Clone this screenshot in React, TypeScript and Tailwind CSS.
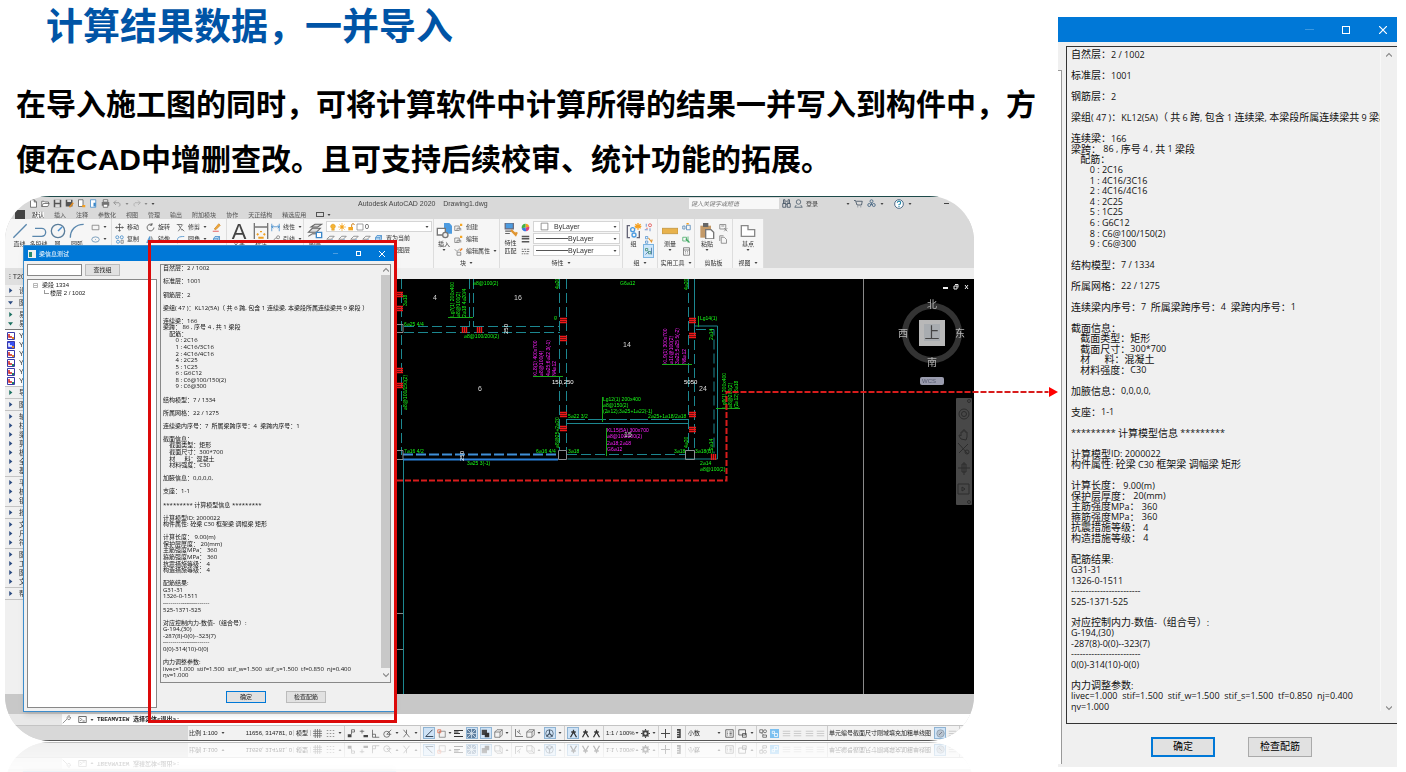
import React from "react";

const REPORT: string[] = [
  "自然层：2 / 1002", "", "标准层：1001", "", "钢筋层：2", "",
  "梁组( 47 )：KL12(5A)（ 共 6 跨, 包含 1 连续梁, 本梁段所属连续梁共 9 梁段 ）", "",
  "连续梁：166", "梁跨： 86 , 序号 4 , 共 1 梁段", "    配筋：",
  "        0 : 2C16", "        1 : 4C16/3C16", "        2 : 4C16/4C16", "        4 : 2C25",
  "        5 : 1C25", "        6 : G6C12", "        8 : C6@100/150(2)", "        9 : C6@300", "",
  "结构模型：7 / 1334", "", "所属网格：22 / 1275", "",
  "连续梁内序号：7  所属梁跨序号：4  梁跨内序号：1", "",
  "截面信息：", "    截面类型：矩形", "    截面尺寸：300*700", "    材      料：混凝土", "    材料强度：C30", "",
  "加腋信息：0,0,0,0,", "", "支座：1-1", "",
  "********* 计算模型信息 *********", "",
  "计算模型ID: 2000022", "构件属性: 砼梁 C30 框架梁 调幅梁 矩形", "",
  "计算长度： 9.00(m)", "保护层厚度： 20(mm)", "主筋强度MPa： 360", "箍筋强度MPa： 360",
  "抗震措施等级： 4", "构造措施等级： 4", "",
  "配筋结果:", "G31-31", "1326-0-1511", "------------------------", "525-1371-525", "",
  "对应控制内力-数值-（组合号）:", "G-194,(30)", "-287(8)-0(0)--323(7)", "------------------------",
  "0(0)-314(10)-0(0)", "", "内力调整参数:",
  "livec=1.000  stif=1.500  stif_w=1.500  stif_s=1.500  tf=0.850  nj=0.400", "ηv=1.000",
];

const UI = "font-['Liberation_Sans','Noto_Sans_CJK_SC',sans-serif]";

function Report({ large }: { large?: boolean }) {
  return (
    <div className={`flex h-full min-w-0 flex-1 flex-col overflow-x-clip font-['Open_Sans','Noto_Sans_CJK_SC',sans-serif] text-[#111] ${large ? "text-[9px]" : "text-[6px]"}`}>
      {REPORT.map((line, i) => (
        <div key={i} className="flex min-h-0 flex-1 items-center leading-none whitespace-pre">
          {line.split(/([\u3000-\u9fff\uff00-\uffef]+)/).map((run, j) => (
            <span key={j} className={j % 2 === 1 && large ? "text-[10px]" : ""}>{run}</span>
          ))}
        </div>
      ))}
    </div>
  );
}

type GlyphProps = { n: string; s?: string };

const GLYPHS: Record<string, React.ReactNode> = {
  line: <path d="M1 11 11 1" stroke="#5a87ad" />,
  pline: <path d="M1 10h7a3 3 0 0 0 0-6H3" stroke="#5a87ad" />,
  circle: <><circle cx="6" cy="6" r="5" stroke="#5a7d9a" /><path d="m6 6 3-3" stroke="#4a90d0" /></>,
  arc: <path d="M1 11C1 5 5 1 11 1" stroke="#5a87ad" />,
  rect: <path d="M1.500 3h9v6h-9z" stroke="#777" />,
  ellipse: <><ellipse cx="6" cy="6" rx="5" ry="3.500" stroke="#5a87ad" /><path d="M5.500 6h1" stroke="#5a87ad" /></>,
  move: <path d="M6 1v10M1 6h10M4.500 2.500 6 1l1.500 1.500M4.500 9.500 6 11l1.500-1.500M2.500 4.500 1 6l1.500 1.500M9.500 4.500 11 6 9.500 7.500" stroke="#444" />,
  rotate: <path d="M8 2a4.500 4.500 0 1 0 2.500 4M8 0v3h-3" stroke="#444" />,
  trim: <path d="M1 2h7M3 2l5 8M9 2 5 7M8 8l3 3M5 8l-2 3" stroke="#555" />,
  pencil: <><path d="m3 8 6-7 2 2-6 6z" fill="#f0a93b" stroke="#d08a2a" /><path d="M1 11h8" stroke="#d33" /></>,
  copy: <><circle cx="3" cy="3" r="2" stroke="#3c87c8" /><circle cx="9" cy="3" r="2" stroke="#3c87c8" /><circle cx="4" cy="9" r="2" stroke="#3c87c8" /><path d="M8 7h3v4H8z" stroke="#777" /></>,
  mirror: <><path d="M5 2v8H1z" fill="#7db4e0" stroke="#3c87c8" /><path d="M7 2v8h4z" stroke="#888" /></>,
  fillet: <path d="M2 11V7c0-4 2-5 9-5" stroke="#3c87c8" />,
  box: <path d="M2 5h6v5H2zM2 5l2-3h6L8 5M10 2v5l-2 3" fill="#b8d8f2" stroke="#3c87c8" />,
  dim: <><path d="M1 0v12M11 0v12M1 3h10" stroke="#777" /><path d="M6 6v1M3 8l1 1M9 8 8 9M4 11h4" stroke="#f0a020" strokeWidth="1.500" /></>,
  linear: <path d="M1 1v10M11 1v10M1 5h10M3 3 1 5l2 2M9 3l2 2-2 2" stroke="#3c87c8" />,
  leader: <><path d="M1 10 6 4h2" stroke="#777" /><circle cx="9.500" cy="3" r="2" stroke="#777" /></>,
  layers: <><path d="M3 3 6 1h5L8 3zM1 7l3-3h6L7 7zM1 10l3-2h5" fill="#ddd" stroke="#666" strokeWidth="0.800" /><path d="M7 7h4v4H7z" fill="#fff" stroke="#3c87c8" /></>,
  layer: <><path d="M1 7l4-4h6L7 7zM1 10h5l2-2" stroke="#777" /><path d="M8 7v4" stroke="#3c87c8" strokeWidth="1.500" /></>,
  bulb: <path d="M4 8a3.500 3.500 0 1 1 4 0v3H4z" fill="#f5b335" stroke="#c98b1c" strokeWidth="0.500" />,
  sun: <><circle cx="6" cy="6" r="2.500" fill="#f5a623" /><path d="M6 0v12M0 6h12M2 2l8 8M10 2l-8 8" stroke="#f5a623" /></>,
  lock: <><path d="M2 6h7v5H2z" fill="#f5a623" /><path d="M7 6V3a2 2 0 0 1 4 0" stroke="#d08a2a" strokeWidth="1.500" /></>,
  sq: <path d="M1.500 1.500h9v9h-9z" fill="#fff" stroke="#777" />,
  insert: <><path d="M6 0h4l2 2v6H6z" fill="#4c9be0" /><path d="M1 4h6v5H1z" fill="#fff" stroke="#777" /><circle cx="7" cy="9" r="2" fill="#eee" stroke="#777" /></>,
  create: <><path d="M1 4h6v6H1zM4 10v-3h5v3" stroke="#777" /><path d="M8 1h3v3H8z" fill="#f5a623" /></>,
  attr: <><path d="m1 3 3 3 4-4M4 7h5v4H4z" stroke="#777" /><path d="m8 5 3-3" stroke="#f08020" strokeWidth="2" /></>,
  match: <><path d="M1 0h7v5H1z" fill="#4c9be0" stroke="#667" /><path d="M1 7h5M1 9h4" stroke="#666" /><path d="m6 6 4 4 1-2" stroke="#e09530" strokeWidth="2" /></>,
  wheel: <><path d="M6 6V1a5 5 0 0 1 5 4z" fill="#f5a020" /><path d="m6 6 5-1a5 5 0 0 1-4 6z" fill="#e0407a" /><path d="m6 6 1 5a5 5 0 0 1-6-4z" fill="#3c78e0" /><path d="M6 6 1 7a5 5 0 0 1 5-6z" fill="#45b045" /></>,
  weight: <path d="M1 2h10M1 5h10M1 9h10" stroke="#555" strokeWidth="1.800" />,
  dashes: <path d="M1 3h2m1 0h3m1 0h3M1 6h3m1 0h2m1 0h3M1 9h2m1 0h2m1 0h3" stroke="#555" />,
  group: <><path d="M3 2H1v9h2M8 11h2V6" stroke="#667" /><circle cx="5" cy="5" r="1.500" stroke="#4c9be0" /><circle cx="6" cy="9" r="1.500" stroke="#4c9be0" /><path d="M9 0v5M6.500 2.500h5M7 1l4 3M11 1 7 4" stroke="#f5a020" /></>,
  ungroup: <><path d="M3 1v4M1 9h4M8 7v4" stroke="#4c78c0" /><circle cx="8" cy="3" r="2" stroke="#e04040" /><path d="M3 7h2" stroke="#e04040" /></>,
  gedit: <><path d="M2 2h3v3H2zM2 8h3v3H2z" stroke="#4c90d0" /><path d="m6 4 4 5 1-3" stroke="#e09530" strokeWidth="1.500" /></>,
  gsel: <><path d="M2 2h3v3H2zM6 6h3v3H6z" stroke="#3a8a6a" /><path d="M10 1v9M2 10l4-4" stroke="#3a6a9a" /></>,
  ruler: <path d="M0 4h12v4H0z" fill="#e8b24c" stroke="#b8862c" strokeWidth="0.500" />,
  calc: <path d="M2 1h8v10H2zM2 4h8M4 6h1m2 0h1M4 8h1m2 0h1" stroke="#666" />,
  green: <><path d="M1 3h5v5H1zM8 2v8" stroke="#3fa860" /><path d="m5 5 5 5" stroke="#3fa860" strokeWidth="1.500" /></>,
  meas: <><path d="M1 4h3v4H1zM6 3h5v6H6z" stroke="#4c80b0" /><path d="M6 1h3" stroke="#f5a020" strokeWidth="2" /></>,
  paste: <><path d="M1 2h8v9H1z" fill="#c49a68" /><path d="M3 0h4v3H3z" fill="#666" /><path d="M5 5h4l2 2v5H5z" fill="#fff" stroke="#777" /></>,
  cut: <path d="M1 2h8v6H1zM3 4h4M7 7l4 4M11 7l-4 4" stroke="#777" />,
  page: <path d="M3 3h4l3 3v5H3zM1 8V1h5" stroke="#777" />,
  base: <path d="M1 2h5v3h5v5H1z" fill="#fff" stroke="#888" />,
  newf: <path d="M2 1h5l3 3v7H2zM7 1v3h3" fill="#fff" stroke="#555" />,
  open: <path d="M1 10V3h3l1 1h5v2M1 10l2-4h8l-2 4z" fill="#fff" stroke="#555" />,
  save: <><path d="M1 1h10v10H1z" fill="#555" /><path d="M3 1h6v4H3zM3 7h6v4H3z" fill="#ddd" /></>,
  saveas: <><path d="M1 1h9v9H1z" fill="#555" /><path d="M3 1h5v3H3z" fill="#ddd" /><path d="m6 11 5-6" stroke="#e08a20" strokeWidth="2" /></>,
  web: <><path d="M2 1h7v10H2z" fill="#fff" stroke="#3c87c8" /><path d="M6 5h3v5H6z" fill="#3c87c8" /></>,
  sheet: <><path d="M2 1h6v9H2z" fill="#fff" stroke="#555" /><path d="M7 8h4v3H7z" fill="#f5a020" /></>,
  print: <><path d="M3 1h6v3H3z" fill="#fff" stroke="#555" /><path d="M1 4h10v5H1z" fill="#777" /><path d="M3 7h6v4H3z" fill="#fff" stroke="#555" /></>,
  undo: <path d="M1 5h7a3 3 0 0 1 0 5M4 2 1 5l3 3" stroke="#888" />,
  redo: <path d="M11 5H4a3 3 0 0 0 0 5M8 2l3 3-3 3" stroke="#aaa" />,
  bino: <path d="M1 6h4v5H1zM7 6h4v5H7zM2 6V1h2v5M8 6V1h2v5M5 7h2M5 3h2" stroke="#345" />,
  user: <><circle cx="6" cy="4" r="3" stroke="#456" /><path d="M1 11h10l-2-3M3 8l-2 3" stroke="#456" /></>,
  cart: <path d="M0 2h2l2 6h6l1-5H3M5 10v1M9 10v1" stroke="#345" />,
  share: <><circle cx="6" cy="3" r="2" stroke="#357" /><circle cx="3" cy="8" r="2" stroke="#357" /><circle cx="9" cy="8" r="2" stroke="#357" /><path d="M6 5v3" stroke="#357" /></>,
  help: <><circle cx="6" cy="6" r="5.200" fill="#fff" stroke="#357" /><path d="M4 4.500a2 2 0 1 1 2 2v1M6 8.500v1" stroke="#28a" strokeWidth="1.300" /></>,
  grid: <path d="M0 3h12M0 6h12M0 9h12M3 0v12M6 0v12M9 0v12" stroke="#666" />,
  dots: <path d="M1 2h2m2 0h2m2 0h2M1 6h2m2 0h2m2 0h2M1 10h2m2 0h2m2 0h2" stroke="#777" />,
  snap: <><path d="M1 7h5v4H1z" fill="#444" /><path d="M6 7V1h4v3H6" stroke="#555" /></>,
  dyn: <><path d="M1 3h6M4 1v5" stroke="#555" /><path d="M6 8h6v3H6z" fill="#444" /></>,
  ortho: <path d="M2 1v10h9M2 7h4v4" stroke="#555" />,
  polar: <><circle cx="5" cy="7" r="4" stroke="#555" /><path d="M5 7 11 1M5 7h6" stroke="#555" /></>,
  iso: <path d="m2 1 8 10M6 6V1M6 6l-4 5" stroke="#555" />,
  track: <path d="M10 1 1 10h10" stroke="#345" strokeWidth="1.300" />,
  osnap: <><path d="M3 3h8v8H3z" stroke="#777" /><path d="M1 1h4v4H1z" stroke="#e06040" /></>,
  lwt: <path d="M0 2h12M0 6h8M0 10h12M0 4h6" stroke="#333" strokeWidth="1.500" />,
  transp: <><path d="M0 0h12v12H0z" fill="#5f7f9f" /><path d="M0 0l12 12M12 0 0 12M6 0v12M0 6h12" stroke="#dde8f2" /></>,
  cyc: <><path d="M1 1h7v7H1z" fill="#444" /><path d="M5 5h6v6H5z" fill="#333" /></>,
  cube: <path d="M1 4h7v7H1zM1 4l3-3h7L8 4M11 1v7l-3 3" stroke="#666" />,
  ucs: <path d="M2 0v10h10M4 3l5 4M7 1v3" stroke="#555" />,
  gizmo: <><circle cx="6" cy="6" r="5" stroke="#456" /><path d="M6 1v5l-4 4M6 6l4 4" stroke="#456" strokeWidth="1.500" /></>,
  person: <path d="M6 1v5M6 4 2 11M6 4l4 7M3 4h6" stroke="#333" strokeWidth="1.700" />,
  gear: <><circle cx="6" cy="6" r="3" stroke="#444" strokeWidth="2.500" /><path d="M6 0v2M6 10v2M0 6h2M10 6h2M2 2l1 1M9 9l1 1M10 2 9 3M3 9l-1 1" stroke="#444" strokeWidth="1.500" /></>,
  plus: <path d="M6 0v12M0 6h12" stroke="#444" strokeWidth="1.300" />,
  scale: <><path d="M4 0h5v12H4z" fill="#444" /><path d="M4 3h3M4 6h3M4 9h3" stroke="#fff" /></>,
  props: <path d="M1 1h10v10H1zM3 4h1m2 0h3M3 6h1m2 0h3M3 8h1m2 0h3" stroke="#444" />,
  screen: <path d="M1 1h9v7H1zM6 6h5v5H6z" stroke="#444" />,
  isolate: <><circle cx="8" cy="3" r="2" stroke="#555" /><path d="M1 1h4v4H1zM5 8h5v3H5zM3 5l3 3" stroke="#555" /></>,
  hw: <><path d="M0 0h12v12H0z" fill="#7cc0f0" /><path d="M3 3h3v3H3zM6 6h4v4H6z" stroke="#fff" /></>,
  bars: <path d="M1 3h10M1 6h10M1 9h10" stroke="#ccc" strokeWidth="1.500" />,
  disc: <><circle cx="6" cy="6" r="5" fill="#b8c4d0" stroke="#8a9aaa" /><path d="M4 8l4-4" stroke="#667" /></>,
  wrench: <path d="m1 11 6-6M7 5a3 3 0 0 1 3-4L9 3l1 1 2-1a3 3 0 0 1-4 3z" stroke="#777" />,
  term: <path d="M1 2h10v8H1zM3 4l2 2-2 2M6 8h3" stroke="#444" />,
};

function Glyph({ n, s = "size-[9px]" }: GlyphProps) {
  return <svg viewBox="0 0 12 12" fill="none" className={`shrink-0 ${s}`} aria-hidden="true">{GLYPHS[n]}</svg>;
}

function Caret({ c = "text-[#444]" }: { c?: string }) {
  return <svg viewBox="0 0 6 4" className={`h-[2px] w-[4px] shrink-0 ${c}`} aria-hidden="true"><path d="M0 0h6L3 4z" fill="currentColor" /></svg>;
}

function Big({ n, label, w, caret }: { n: string; label: string; w: string; caret?: boolean }) {
  return (
    <button className={`flex h-[36px] shrink-0 flex-col items-center gap-px pt-[2px] ${w}`}>
      {n === "A" ? <span className="h-[16px] text-[22px] leading-[18px] text-[#444]">A</span> : <Glyph n={n} s="size-[16px]" />}
      <span className="leading-[8px] whitespace-nowrap">{label}</span>
      {caret && <Caret />}
    </button>
  );
}

function Small({ n, label, caret }: { n: string; label?: string; caret?: boolean }) {
  return (
    <button className="flex h-[12px] items-center gap-[3px] whitespace-nowrap">
      <Glyph n={n} />{label}{caret && <Caret />}
    </button>
  );
}

function Group({ w, title, children }: { w: string; title?: string; children: React.ReactNode }) {
  return (
    <div className={`flex shrink-0 flex-col border-r border-[#ddd] bg-[#f6f6f6] pt-[2px] ${w}`}>
      <div className="flex h-[36px]">{children}</div>
      <div className="flex h-[11px] items-center justify-center gap-[3px] whitespace-nowrap">{title}{title && title !== "剪贴板" && <Caret />}</div>
    </div>
  );
}

function LayerSelect({ label, swatch }: { label: string; swatch?: boolean }) {
  return (
    <div className="relative flex h-[11px] items-center border border-[#d5d5d5] bg-white px-[2px]">
      {swatch ? <><Glyph n="sq" s="ml-[4px] size-[9px]" /><span className="w-[5px]" /></> : <span className="h-px w-[32px] bg-[#555]" />}
      <select aria-label={label} className="h-[9px] min-w-0 flex-1 appearance-none bg-transparent p-0 text-[7px] leading-[9px] outline-none"><option>ByLayer</option></select>
      <Caret />
    </div>
  );
}

function Ribbon() {
  return (
    <div className="flex h-[49px] bg-[#d9d9d9] text-[6px] text-[#333]">
      <Group w="w-[107px]">
        <div className="w-[5px]" />
        <Big n="line" label="直线" w="w-[19px]" /><Big n="pline" label="多段线" w="w-[19px]" />
        <Big n="circle" label="圆" w="w-[19px]" /><Big n="arc" label="圆弧" w="w-[20px]" />
        <div className="pl-[4px]"><Small n="rect" caret /><Small n="ellipse" caret /></div>
      </Group>
      <Group w="w-[115px]">
        <div className="w-[34px] pl-[3px]"><Small n="move" label="移动" /><Small n="copy" label="复制" /></div>
        <div className="w-[30px]"><Small n="rotate" label="旋转" /><Small n="mirror" label="镜像" /></div>
        <div className="w-[36px]"><Small n="trim" label="修剪" caret /><Small n="fillet" label="圆角" caret /></div>
        <div><Small n="pencil" /><Small n="box" /></div>
      </Group>
      <Group w="w-[77px]">
        <Big n="A" label="文字" w="w-[24px]" /><Big n="dim" label="标注" w="w-[20px]" />
        <div><Small n="linear" label="线性" caret /><Small n="leader" label="引线" caret /></div>
      </Group>
      <Group w="w-[130px]">
        <Big n="layers" label="图层" w="w-[22px]" />
        <div className="min-w-0 flex-1 pr-px">
          <div className="flex h-[11px] items-center gap-px border border-[#d5d5d5] bg-white px-[2px]">
            <Glyph n="bulb" s="size-[8px]" /><Glyph n="sun" s="size-[8px]" /><Glyph n="lock" s="size-[8px]" /><Glyph n="sq" s="size-[8px]" />
            <select aria-label="图层" className="h-[9px] min-w-0 flex-1 appearance-none bg-transparent p-0 text-[7px] leading-[9px]"><option>0</option></select><Caret />
          </div>
          <div className="flex gap-[3px]"><Small n="layer" /><Small n="layer" /><Small n="layer" /><Small n="layer" /><Small n="box" label="置为当前" /></div>
          <div className="flex gap-[3px]"><Small n="layer" /><Small n="layer" /><Small n="layer" /><Small n="layer" /><Small n="layer" label="匹配图层" /></div>
        </div>
      </Group>
      <Group w="w-[66px]" title="块">
        <Big n="insert" label="插入" w="w-[20px]" caret />
        <div><Small n="create" label="创建" /><Small n="create" label="编辑" /><Small n="attr" label="编辑属性" caret /></div>
      </Group>
      <Group w="w-[123px]" title="特性">
        <button className="flex w-[21px] shrink-0 flex-col items-center pt-[2px]"><Glyph n="match" s="size-[14px]" /><span className="mt-[2px] leading-[8px]">特性<br />匹配</span></button>
        <div className="w-[12px]"><Small n="wheel" /><Small n="weight" /><Small n="dashes" /></div>
        <div className="flex min-w-0 flex-1 flex-col gap-px pr-[2px]"><LayerSelect label="颜色" swatch /><LayerSelect label="线宽" /><LayerSelect label="线型" /></div>
      </Group>
      <Group w="w-[35px]" title="组">
        <Big n="group" label="组" w="w-[21px]" /><div><Small n="ungroup" /><Small n="gedit" /><div className="bg-[#cde6fa] outline outline-[#7bb4e0]"><Small n="gsel" /></div></div>
      </Group>
      <Group w="w-[37px]" title="实用工具">
        <Big n="ruler" label="测量" w="w-[24px]" caret /><div><Small n="meas" /><Small n="green" /><Small n="calc" /></div>
      </Group>
      <Group w="w-[38px]" title="剪贴板">
        <Big n="paste" label="粘贴" w="w-[24px]" caret /><div><Small n="cut" /><Small n="page" /></div>
      </Group>
      <Group w="w-[31px]" title="视图"><Big n="base" label="基点" w="w-full" caret /></Group>
    </div>
  );
}

function AppTitle() {
  return (
    <div className="flex h-[14px] shrink-0 items-center border-t border-[#1d4a4a] text-[#444]">
      <div className="flex w-[353px] shrink-0 items-center gap-[3px] pl-[24px]">
        {["newf", "open", "save", "saveas", "sheet", "web", "print"].map((n) => <button key={n} aria-label={n}><Glyph n={n} /></button>)}
        <Glyph n="undo" /><Caret c="text-[#888]" /><Glyph n="redo" /><Caret c="text-[#888]" /><Caret />
      </div>
      <div className="w-[331px] shrink-0 text-[7px] leading-[12px] whitespace-pre">Autodesk AutoCAD 2020    Drawing1.dwg</div>
      <input aria-label="搜索" placeholder="键入关键字或短语" className="h-[11px] w-[90px] shrink-0 border-0 bg-[#f8f8f8] px-[2px] text-[6px] italic outline-none placeholder:text-[#777]" />
      <div className="flex items-center gap-[3px] pl-[3px] text-[6px]"><Glyph n="bino" /><Glyph n="user" />登录</div>
      <div className="flex items-center gap-[4px] pl-[28px]"><Caret /><Glyph n="cart" /><Glyph n="share" /><Caret /><span className="w-[2px]" /><Glyph n="help" s="size-[10px]" /><Caret /></div>
      <span className="ml-[32px] h-px w-[5px] bg-[#444]" />
    </div>
  );
}

const TABS = ["默认", "插入", "注释", "参数化", "视图", "管理", "输出", "附加模块", "协作", "天正结构", "精选应用"];

const PALETTE: string[][] = [["设"], ["图"], ["易", "易"], ["Y1", "Y2", "Y3", "Y4", "Y5", "Y6"], ["导"], ["图"], ["轴", "柱", "梁", "剪", "板", "全", "基"], ["平", "桩", "钢"], ["批"], ["文", "尺", "符"], ["图", "工", "图", "文"], ["帮"]];

function Palette() {
  return (
    <div className="w-[390px] shrink-0 bg-[#f0f0f0] text-[7px] text-[#333]">
      <div className="mt-[-11px] flex h-[17px] items-center bg-[#e0e0e0] pl-[4px]">⁝ T20</div>
      {PALETTE.map((g, i) => (
        <div key={i} className={`border-b py-px ${i === 3 ? "bg-white" : ""} ${i === 2 ? "border-[#777]" : "border-[#c4c4c4]"}`}>
          {g.map((r, j) => (
            <div key={j} className="flex h-[9px] items-center">
              {r[0] === "Y" ? (
                <svg viewBox="0 0 8 8" className="ml-[2px] size-[8px]"><path d="M.5.5h7v7h-7z" fill={j === 1 ? "#3a50f0" : "#fff"} stroke="#3a3aa8" /><path d="M2 2v3h3" fill="none" stroke={j === 1 ? "#fff" : "#d02020"} strokeWidth="1.500" /><path d="M5 5h2v2H5z" fill={j > 2 ? "#208060" : "#e08a20"} /></svg>
              ) : (
                <svg viewBox="0 0 8 8" className="ml-[3px] size-[5px]"><path d={i === 1 || j === 1 && i === 2 ? "M0 2h8L4 7z" : "M2 0v8l5-4z"} fill={i === 2 || i === 4 ? "#1a7060" : "#2a4a80"} /></svg>
              )}
              <span className={r[0] === "Y" ? "ml-[4px]" : "ml-[6px]"}>{r[0]}</span>
            </div>
          ))}
        </div>
      ))}
    </div>
  );
}

const H_TICKS: [number, number][] = [[396, 293], [396, 307], [396, 369], [396, 384], [560, 319], [560, 337], [560, 413], [560, 427], [689, 319], [689, 334], [689, 413], [689, 428]];
const V_TICKS: [number, number][] = [[462, 327], [477, 327], [711, 454]];
const LABELS: [number, number, string][] = [
  [404, 326, "6⌀25 4/4"], [404, 453, "7⌀16 4/2"], [464, 338, "⌀8@100/200(2)"], [473, 285, "⌀8@100(2)"], [536, 453, "6⌀16 4/4"],
  [467, 465, "3⌀25 3(-1)"], [620, 285, "G6⌀12"], [700, 320, "Lg14(1)"], [603, 401, "Lg12(1) 200x400"], [603, 407, "⌀8@150(2)"],
  [603, 413, "(2⌀12);3⌀25+1⌀22(-1)"], [568, 418, "5⌀22 3/2"], [648, 418, "2⌀25+1⌀18/2⌀18"], [568, 453, "3⌀18"], [674, 453, "3⌀18"],
  [695, 453, "3⌀18(B)"], [700, 465, "2⌀14"], [700, 471, "⌀8@100(2)"], [554, 319, "g"],
];
const V_LABELS: [number, number, string, string][] = [
  [454, 317, "Lg7(1) 200x400", "g"], [460, 317, "⌀8@100(2)", "g"], [466, 317, "2⌀18 4⌀20/4", "g"], [407, 306, "3⌀18", "g"], [407, 410, "⌀8@100/150(2)", "g"],
  [559, 289, "4⌀20", "g"], [559, 448, "⌀8@25+2⌀20", "g"], [688, 290, "4⌀20", "g"], [713, 340, "2⌀14", "g"], [713, 450, "2⌀14", "g"], [688, 448, "4⌀20", "g"],
  [726, 408, "Lg8(1) 200x400", "g"], [732, 408, "⌀8@200(2)", "g"], [738, 408, "(2⌀12);3⌀18", "g"],
  [537, 376, "KL8(1) 400x700", "m"], [543, 376, "⌀8@100(4)", "m"], [550, 376, "4⌀25;6⌀22 3(-1)", "m"], [556, 376, "N4⌀12", "m"],
  [667, 364, "KL9(1) 300x700", "m"], [673, 364, "⌀10@100(2)", "m"], [679, 364, "3⌀25;5⌀25 5(-2)", "m"], [686, 364, "N6⌀12", "m"],
];

function Drawing() {
  return (
    <svg viewBox="395 279 579 415" width="579" height="415" className="block shrink-0 font-['Liberation_Sans','Noto_Sans_CJK_SC',sans-serif]" fill="none" role="img" aria-label="结构平面图">
      <g stroke="#1c8790" strokeWidth="1">
        <path strokeDasharray="10 4" d="M401.500 279v176M469.500 279v48M473.500 279v48M404 326.500h156M404 332.500h156M559.500 279v171M566.500 279v171M688.500 279v171M694.500 326v124M567 454.500h118M696 329.500h18v124" />
        <path strokeDasharray="18 3" d="M567 419.500h121" />
        <path d="M567 423.500h121M694.500 279v47h23v133h-150M403.500 459v235" />
      </g>
      <path d="M397 613.500h6M397 649.500h6" stroke="#888" />
      <path d="M403 454.500h155" stroke="#3f8fd8" strokeWidth="2" strokeDasharray="10 3" />
      <path d="M403 459.500h155" stroke="#2a80d8" strokeWidth="2" />
      <path d="M395 324.500h8v8h-8M395 450.500h8v9h-8M558.500 450.500h8v9h-8zM685.500 450.500h9v9h-9z" stroke="#8a8f93" />
      <path d="M863.500 279v415" stroke="#8a8a8a" />
      <g stroke="#f01818" strokeWidth="1.400">
        {H_TICKS.map(([x, y]) => <path key={`${x}-${y}`} d={`M${x} ${y - 0.5}h7m-7 2h7m-7 2h7`} />)}
        {V_TICKS.map(([x, y]) => <path key={x} d={`M${x + 0.5} ${y}v6m2-6v6m2-6v6`} />)}
      </g>
      <path d="M448 317.500h25M533 376.500h30M662 364.500h30M602.500 397v25M606.500 428v28M698.500 316v11M716 408.500h24" stroke="#18a818" />
      <g fill="#18ff18" fontSize="5">{LABELS.map(([x, y, t]) => <text key={t + x + y} x={x} y={y}>{t}</text>)}</g>
      <g fontSize="5">{V_LABELS.map(([x, y, t, c]) => <text key={t + x + y} fill={c === "g" ? "#18ff18" : "#ff20ff"} transform={`translate(${x} ${y}) rotate(-90)`}>{t}</text>)}</g>
      <g fill="#ff20ff" fontSize="5">
        <text x="607" y="432">KL15(5A) 300x700</text><text x="607" y="438">⌀8@100/200(2)</text><text x="607" y="445">2⌀18;2⌀18</text><text x="607" y="451">G6⌀12</text>
      </g>
      <g fill="#d8d8d8" fontSize="7">
        <text x="433" y="300">4</text><text x="514" y="300">16</text><text x="478" y="391">6</text><text x="623" y="347">14</text><text x="699" y="391">24</text><text x="624" y="437">15</text>
      </g>
      <g fill="#fff" fontSize="6">
        <text x="552" y="384">150,250</text><text x="684" y="384">5050</text>
        <text transform="translate(508 334) rotate(-90)">250</text><text transform="translate(464 461) rotate(-90)">250</text>
      </g>
      <path d="M943 288h5" stroke="#eee" strokeWidth="2" /><path d="M954 286h3v3h-3zM955 284.500h3v3M965 285l3 4M968 285l-3 4" stroke="#eee" />
      <circle cx="932" cy="333" r="27" stroke="#333" strokeWidth="6" />
      <g fill="#b4b4b4" fontSize="10" textAnchor="middle"><text x="932" y="308">北</text><text x="903" y="337">西</text><text x="960" y="337">东</text><text x="932" y="366">南</text></g>
      <path d="M919 320h26v26h-26z" fill="#b8b8b8" /><path d="M924 324h16v17h-16z" fill="#a8acb0" />
      <text x="932" y="338" fill="#444" fontSize="15" textAnchor="middle">上</text>
      <rect x="920" y="377" width="24" height="8" rx="2" fill="#9a9cae" /><text x="922" y="383" fontSize="6" fill="#555a70">WCS</text>
      <rect x="956" y="398" width="16" height="107" rx="1" fill="#484848" />
      <g stroke="#2c2c2c"><circle cx="964" cy="414" r="5" /><circle cx="964" cy="414" r="2.500" /><path d="M961 439c-3-4-2-5 0-3v-4h2v-2h2v2h2v5l-1 3zM958 443l10 11M968 444l-9 9M964 462v13M958 468h12M962 464h4v8h-4zM958 484h11v10h-11zM962 487v4l3-2z" /><circle cx="967" cy="452" r="2" /><circle cx="969" cy="401" r="1.500" /><circle cx="969" cy="502" r="1.500" /></g>
    </svg>
  );
}

function Seg({ w, items }: { w: string; items: string[] }) {
  return (
    <div className={`flex h-full shrink-0 items-center justify-between border-r border-[#ccc] px-[2px] ${w}`}>
      {items.map((n, i) => n === "v" ? <Caret key={i} /> : n[0] === "*" ? (
        <button key={i} aria-label={n.slice(1)} className="flex size-[12px] items-center justify-center border border-[#8fb4d4] bg-[#cfe3f6]"><Glyph n={n.slice(1)} /></button>
      ) : <button key={i} aria-label={n}><Glyph n={n} /></button>)}
    </div>
  );
}

function StatusBar() {
  return (
    <div className="flex h-[16px] items-center border-t border-b border-t-[#c4c4c4] border-b-[#555] bg-[#d8d8d8] pl-[183px] text-[6px] whitespace-nowrap text-[#222]">
      <div className="flex h-full min-w-0 flex-1 items-center overflow-hidden bg-[#f2f2f2]">
        <div className="flex w-[36px] shrink-0 items-center gap-[3px] pl-px">比例 1:100<Caret /></div>
        <div className="w-[69px] shrink-0 pr-px text-right">11656, 314781, 0</div>
        <div className="w-[18px] shrink-0 border-x border-[#ccc] text-center">模型</div>
        <Seg w="w-[34px]" items={["grid", "dots", "v"]} />
        <Seg w="w-[76px]" items={["snap", "dyn", "ortho", "polar", "v", "iso", "v"]} />
        <Seg w="w-[91px]" items={["*track", "osnap", "v", "lwt", "*transp", "*cyc", "cube", "v"]} />
        <Seg w="w-[53px]" items={["ucs", "cube", "v", "*gizmo", "v"]} />
        <Seg w="w-[39px]" items={["*person", "person", "person"]} />
        <div className="flex w-[35px] shrink-0 items-center justify-between px-[2px]">1:1 / 100%<Caret /></div>
        <Seg w="w-[20px]" items={["gear", "v"]} />
        <Seg w="w-[13px]" items={["plus"]} />
        <Seg w="w-[14px]" items={["scale"]} />
        <div className="flex w-[37px] shrink-0 items-center justify-between px-[2px]">小数<Caret /></div>
        <Seg w="w-[13px]" items={["props"]} />
        <Seg w="w-[21px]" items={["screen", "v"]} />
        <Seg w="w-[71px]" items={["isolate", "hw", "bars", "bars", "bars", "bars"]} />
        <div className="w-[104px] shrink-0 pl-px">单元编号截面尺寸刚域填充加粗单线图</div>
        <Seg w="w-[28px]" items={["*disc", "bars"]} />
      </div>
    </div>
  );
}

function BeamDialog() {
  return (
    <section className="absolute top-[49px] left-[18px] flex h-[467px] w-[373px] flex-col border border-[#3c8ccc] bg-[#f0f0f0] text-[6px] text-[#222] shadow-md">
      <header className="flex h-[15px] shrink-0 items-center bg-[#0078d7] px-[4px] text-white">
        <svg viewBox="0 0 8 8" className="mr-[3px] size-[8px]"><path d="M0 0h8v8H0z" fill="#eee" /><path d="M1 2h3v5H1z" fill="#278a6a" /></svg>
        梁信息测试
        <span className="ml-auto h-px w-[5px] bg-[#4a9ce0]" />
        <button aria-label="最大化" className="ml-[18px] size-[5px] border border-white" />
        <button aria-label="关闭" className="mr-[6px] ml-[18px]"><svg viewBox="0 0 6 6" className="size-[6px]"><path d="m0 0 6 6M6 0 0 6" stroke="#fff" /></svg></button>
      </header>
      <div className="flex min-h-0 flex-1 gap-[3px] pt-[3px] pr-[4px] pb-[3px] pl-[3px]">
        <div className="flex w-[130px] shrink-0 flex-col gap-[3px]">
          <div className="flex gap-[3px]">
            <input aria-label="组号" className="h-[12px] w-[55px] border border-[#888] bg-white px-px" />
            <button className="h-[12px] w-[35px] border border-[#bbb] bg-[#e1e1e1] leading-none">查找组</button>
          </div>
          <ul className="flex-1 border border-[#888] bg-white pt-px pl-[5px] leading-[8px]">
            <li className="flex items-center gap-[4px]"><svg viewBox="0 0 5 5" className="size-[5px]" fill="none"><path d="M.5.5h4v4h-4zM1 2.500h3" stroke="#999" strokeWidth="0.700" /></svg>梁段 1334</li>
            <li className="flex items-center gap-px pl-[11px]"><span className="mb-[3px] h-[4px] w-[5px] border-b border-l border-[#999]" />楼层 2 / 1002</li>
          </ul>
        </div>
        <div className="flex min-w-0 flex-1 flex-col">
          <div className="flex h-[419px] border border-[#888] pl-[2px]">
            <div className="flex min-w-0 flex-1 pb-[4px]"><Report /></div>
            <div className="flex w-[9px] shrink-0 flex-col items-center justify-between bg-[#c8c8c8]">
              <span className="flex h-[10px] w-full items-center justify-center bg-[#f0f0f0]"><Chevron up /></span>
              <span className="flex h-[14px] w-full items-center justify-center bg-[#f0f0f0]"><Chevron /></span>
            </div>
          </div>
          <div className="mt-[8px] flex gap-[20px] pl-[66px] leading-none">
            <button className="h-[12px] w-[40px] border border-[#0078d7] bg-[#e1e1e1]">确定</button>
            <button className="h-[12px] w-[40px] border border-[#bbb] bg-[#e1e1e1]">检查配筋</button>
          </div>
        </div>
      </div>
    </section>
  );
}

function Chevron({ up }: { up?: boolean }) {
  return <svg viewBox="0 0 8 8" className="size-[6px]" fill="none"><path d={up ? "m0 6 4-4 4 4" : "m0 2 4 4 4-4"} stroke="#888" strokeWidth="1.500" /></svg>;
}

function CadWindow() {
  return (
    <div className={`relative ml-[5px] mr-[84px] overflow-hidden rounded-[45px] bg-[#d9d9d9] leading-none [-webkit-box-reflect:below_1px_linear-gradient(transparent_93%,rgba(0,0,0,0.4))] ${UI}`}>
      <AppTitle />
      <nav className="flex h-[9px] items-center gap-[10px] pl-[10px] text-[6px] whitespace-nowrap text-[#555]">
        <span className="mr-[-3px] h-[9px] w-[10px] bg-[#444]" />
        {TABS.map((t, i) => <a key={t} href="#" className={i === 0 ? "bg-[#f6f6f6] text-[#222]" : ""}>{t}</a>)}
        <span className="flex items-center gap-[3px]"><span className="h-[5px] w-[8px] border border-[#555]" /><Caret /></span>
      </nav>
      <Ribbon />
      <div className="h-[11px] bg-[#eee]" />
      <div className="flex h-[415px]">
        <Palette />
        <div className="min-w-0 flex-1 overflow-hidden bg-black"><Drawing /></div>
      </div>
      <div className="h-[20px] bg-[#c8c8c8]" />
      <div className="flex h-[11px] items-center bg-[#e8e8e8] pl-[57px]">
        <div className="flex flex-1 items-center gap-[3px] bg-white font-['Liberation_Mono','Noto_Sans_CJK_SC',monospace] text-[6px] leading-[11px] font-bold whitespace-pre text-[#222]">
          <Glyph n="wrench" /><span className="w-px" /><Glyph n="term" /><Caret />TBEAMVIEW 选择实体&lt;退出&gt;:
        </div>
      </div>
      <StatusBar />
      <BeamDialog />
    </div>
  );
}

function DetailPanel() {
  return (
    <aside className={`relative mt-[17px] mr-[9px] flex h-[750px] w-[339px] shrink-0 flex-col bg-[#f0f0f0] ${UI}`}>
      <header className="flex h-[25px] shrink-0 items-center justify-end bg-[#0078d7] pr-[10px]">
        <span className="h-px w-[9px] bg-[#3c98e0]" />
        <button aria-label="最大化" className="ml-[28px] size-[8px] border border-white" />
        <button aria-label="关闭" className="ml-[29px]"><svg viewBox="0 0 8 8" className="size-[8px]"><path d="m0 0 8 8M8 0 0 8" stroke="#fff" strokeWidth="1.200" /></svg></button>
      </header>
      <div className="flex min-h-0 flex-1">
        <div className="mt-[28px] mr-[4px] mb-[3px] w-[4px] border-t border-r border-[#999] bg-white" />
        <div className="flex min-w-0 flex-1 flex-col pt-[4px]">
          <div className="flex h-[678px] border-y border-l border-[#333] pt-[2px] pb-[12px] pl-[4px]">
            <Report large />
            <div className="flex w-[17px] shrink-0 flex-col items-center justify-between border-l border-[#f8f8f8] pt-[3px]"><Chevron up /><Chevron /></div>
          </div>
          <div className="mt-[13px] flex gap-[33px] pl-[85px] text-[10px]">
            <button className="h-[20px] w-[64px] border-2 border-[#0078d7] bg-[#e1e1e1] leading-none">确定</button>
            <button className="h-[20px] w-[64px] border border-[#aaa] bg-[#e1e1e1] leading-none">检查配筋</button>
          </div>
        </div>
      </div>
    </aside>
  );
}

export default function App() {
  return (
    <main className="flex min-h-screen w-full overflow-hidden bg-white">
      <div className="relative h-[772px] min-w-0 flex-1 font-['Liberation_Sans','Noto_Sans_CJK_SC',sans-serif] font-bold">
        <h1 className="h-[77px] pt-[2px] pl-[46px] text-[37px] leading-[52px] whitespace-nowrap text-[#0054a6]">计算结果数据，一并导入</h1>
        <p className="mb-[9px] h-[110px] pl-[16px] text-[30px] leading-[55px] whitespace-nowrap text-black">
          在导入施工图的同时，可将计算软件中计算所得的结果一并写入到构件中，方<br />便在CAD中增删查改。且可支持后续校审、统计功能的拓展。
        </p>
        <div className="font-normal"><CadWindow /></div>
        <div className="absolute top-[240px] left-[148px] h-[483px] w-[249px] border-3 border-[#dc0a0a]" />
        <svg className="absolute top-[380px] left-[397px]" width="661" height="110" fill="none" aria-hidden="true">
          <path d="M0 100.500h329.500V12h322" stroke="#d81c1c" strokeWidth="2" strokeDasharray="6 2" />
          <path d="m652 7 9 5-9 5z" fill="#f00" />
        </svg>
      </div>
      <DetailPanel />
    </main>
  );
}
